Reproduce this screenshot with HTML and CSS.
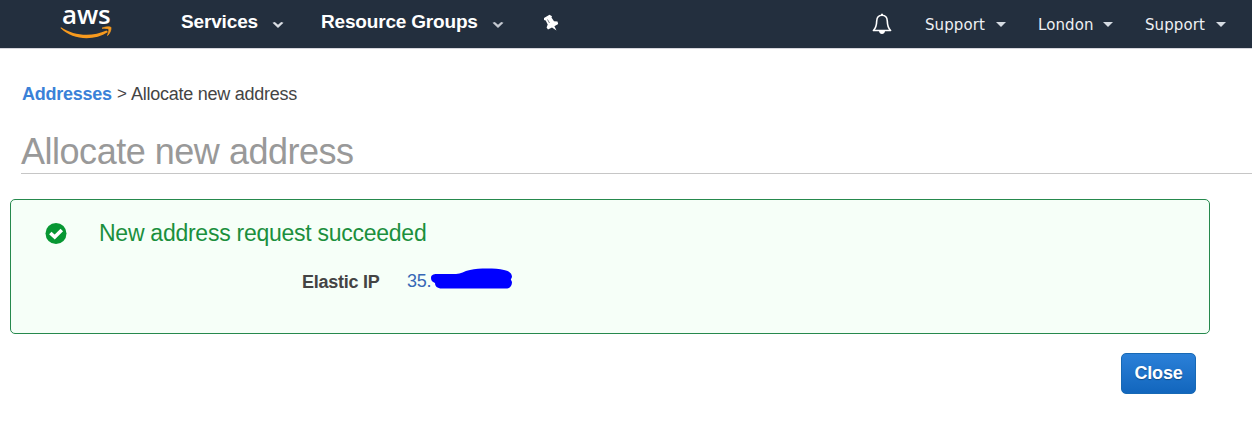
FILE: index.html
```html
<!DOCTYPE html>
<html lang="en">
<head>
<meta charset="utf-8">
<title>Allocate new address</title>
<link rel="stylesheet" href="styles.css">
</head>
<body>
<header class="topbar">
  <a class="logo"><span class="logo-text">aws</span>
    <svg class="smile" width="54" height="14" viewBox="0 0 54 14"><path d="M1 1.200C14 10 32 11 46.500 4.500L48 6C34 15.200 13 14.500 .5 2Z" fill="#f79a1e"/><path d="M42 2.200C46 .3 51 .6 51 1.500C51.400 4 49.500 8 47.500 9.600C48.300 6.500 49.300 4.200 48.700 3C47.500 2.200 45 2.500 42 2.200Z" fill="#f79a1e" stroke="#f79a1e" stroke-width=".7"/></svg>
  </a>
  <nav class="menu">
    <a class="item services"><span>Services</span><svg width="12" height="8" viewBox="0 0 12 8"><path d="M.5 1.700L2.800 1L6 3.800L9.200 1L11.500 1.700L6 7Z" fill="#d9dde3"/></svg></a>
    <a class="item groups"><span>Resource Groups</span><svg width="12" height="8" viewBox="0 0 12 8"><path d="M.5 1.700L2.800 1L6 3.800L9.200 1L11.500 1.700L6 7Z" fill="#c3c8d0"/></svg></a>
    <svg class="pin" width="16" height="18" viewBox="0 0 16 18"><path d="M1 4L6.500 .8L9 2.200L8.500 3.500L11 7.200L14.500 7.500L15.200 10L11.400 12.300L13.500 16.500L9 13.400L5 15.500L3.600 13.500L4.700 10.500L2.700 6.400L1 6Z" fill="#fff"/><path d="M4.500 5.500L6.500 9" stroke="#232f3e" stroke-width=".6"/></svg>
  </nav>
  <div class="account">
    <svg class="bell" width="20" height="22" viewBox="0 0 20 22"><path d="M10 2.200C6.200 2.200 4.800 5 4.700 8C4.600 12.500 3.500 15.500 1.400 17.500H18.600C16.500 15.500 15.400 12.500 15.300 8C15.200 5 13.800 2.200 10 2.200Z" fill="none" stroke="#fff" stroke-width="1.600" stroke-linejoin="round"/><path d="M9 .7H11V3H9ZM7 18H13C12.800 22 7.200 22 7 18Z" fill="#fff"/></svg>
    <a class="link support"><span>Support</span><i class="caret"></i></a>
    <a class="link london"><span>London</span><i class="caret"></i></a>
    <a class="link last"><span>Support</span><i class="caret"></i></a>
  </div>
</header>
<main>
  <div class="crumbs"><a>Addresses</a><span class="sep">&gt;</span><span class="here">Allocate new address</span></div>
  <h1><span>Allocate new address</span></h1>
  <section class="notice">
    <div class="status">
      <svg width="22" height="22" viewBox="0 0 22 22"><circle cx="11" cy="10.500" r="10.500" fill="#079733"/><path d="M5.300 10L9.700 14L16.800 7" fill="none" stroke="#fff" stroke-width="3.600"/></svg>
      <span class="message">New address request succeeded</span>
    </div>
    <div class="detail">
      <span class="label">Elastic IP</span><a class="ip">35.</a>
      <svg class="redaction" width="84" height="22" viewBox="0 0 84 22"><path d="M1 10C1 7 3 6 7 6H26C31 6 34 3 40 2C50 0 66 .3 74 2C80 3 82 6 82 9L80.800 11.500L82 14C82 18 80 20.500 76 20.500H12C7 20.500 5 18 5 15C2 14 1 12 1 10Z" fill="#00f"/></svg>
    </div>
  </section>
  <div class="actions"><button class="close"><span>Close</span></button></div>
</main>
</body>
</html>
```
FILE: styles.css
```css
* { box-sizing: border-box; }
body { margin: 0; height: 423px; overflow: hidden; background: #fff; color: #444; font-family: "Liberation Sans", Arial, sans-serif; white-space: nowrap; }
svg { display: block; flex: none; }
.topbar { display: flex; height: 48px; background: #232f3e; color: #fff; box-shadow: 0 1px #d5d5dc; }
.logo { width: 54px; margin-left: 60px; }
.logo-text { display: block; padding-left: 2px; font: 600 26px/28px "Open Sans", sans-serif; letter-spacing: -.1px; }
.smile { margin-top: -2px; }
.menu { display: flex; margin-left: 67px; font-size: 19px; font-weight: 700; line-height: 20px; }
.item { display: flex; padding-top: 12px; }
.item svg { margin-top: 9px; }
.services { width: 140px; letter-spacing: -.15px; }
.services span { width: 91px; }
.groups { width: 222px; letter-spacing: -.18px; }
.groups span { width: 171px; }
.pin { margin-top: 14px; }
.account { display: flex; margin-left: auto; font: 15px/20px "DejaVu Sans", Verdana, sans-serif; color: #eef0f3; }
.bell { margin: 13px 33px 0 0; }
.link { display: flex; padding-top: 15px; letter-spacing: .1px; }
.link span { width: 71px; }
.support { width: 113px; }
.london { width: 107px; }
.london span { width: 65px; }
.last { width: 107px; }
.caret { height: 5px; margin: 7px 0 0; border: 5px solid transparent; border-top-color: #d5dbe2; border-bottom: 0; }
.crumbs { display: flex; height: 56px; padding: 36px 0 0 22px; font-size: 18px; line-height: 20px; }
.crumbs a { width: 95px; color: #3a81d8; font-weight: 700; letter-spacing: -.27px; }
.sep { width: 14px; font-size: 17px; }
.here { letter-spacing: -.25px; }
h1 { height: 69px; margin: 1px 0 0 21px; padding-top: 27px; border-bottom: 1px solid #c6c6c6; color: #999; font-size: 36px; font-weight: 400; line-height: 40px; letter-spacing: -.48px; }
.notice { width: 1200px; height: 135px; margin: 25px 0 0 10px; padding: 20px 34px; border: 1px solid #26894d; border-radius: 5px; background: #f6fff8; }
.status { display: flex; align-items: center; height: 27px; gap: 32px; color: #1b8f3d; font-size: 23px; letter-spacing: -.26px; }
.detail { display: flex; margin: 20px 0 0 257px; font-size: 18px; line-height: 28px; }
.label { width: 105px; padding-top: 1px; font-weight: 700; letter-spacing: -.25px; }
.ip { width: 23px; color: #3768b6; letter-spacing: -.3px; }
.redaction { margin-top: 1px; }
.actions { display: flex; justify-content: flex-end; padding: 19px 56px 0 0; }
.close { width: 75px; height: 41px; padding: 0 0 2px; border: 1px solid #1769b5; border-radius: 5px; background: linear-gradient(#2b80d8, #1266bd); color: #fff; font: 700 18px/20px "Liberation Sans", Arial, sans-serif; letter-spacing: -.2px; text-shadow: 0 1px 1px #124b85; }
```
